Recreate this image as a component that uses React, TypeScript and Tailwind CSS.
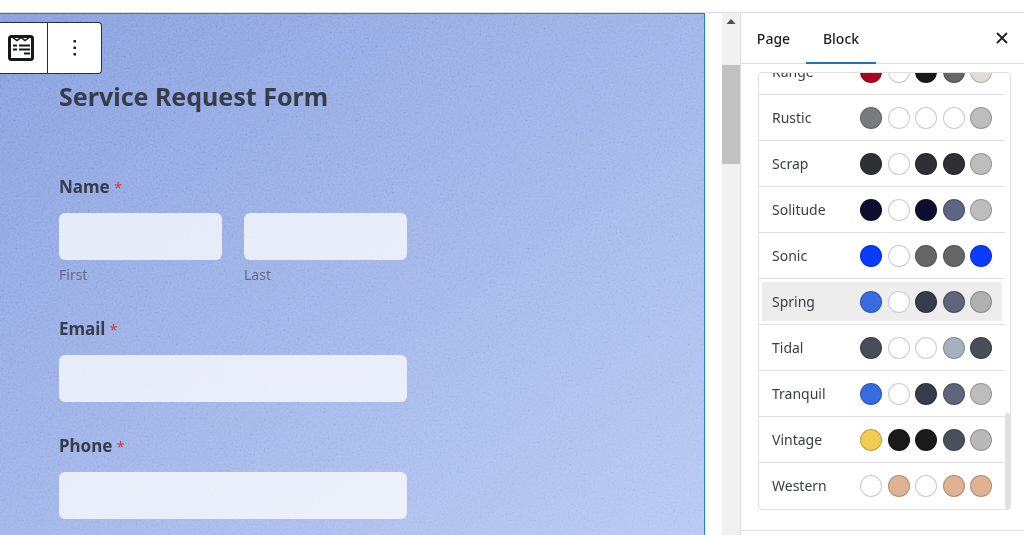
import React, { useState } from "react";

interface Theme {
  name: string;
  colors: string[];
}

const themes: Theme[] = [
  { name: "Range", colors: ["#ab0520", "#ffffff", "#1a1a1a", "#666666", "#e0dcd8"] },
  { name: "Rustic", colors: ["#7a7b7d", "#ffffff", "#ffffff", "#ffffff", "#bdbdbd"] },
  { name: "Scrap", colors: ["#2e3033", "#ffffff", "#2e3033", "#2e3033", "#bdbdbd"] },
  { name: "Solitude", colors: ["#0e0f30", "#ffffff", "#0e0f30", "#5e6580", "#bdbdbd"] },
  { name: "Sonic", colors: ["#083cff", "#ffffff", "#666666", "#666666", "#083cff"] },
  { name: "Spring", colors: ["#376be0", "#ffffff", "#363c4a", "#5f6478", "#b0b0b0"] },
  { name: "Tidal", colors: ["#484e58", "#ffffff", "#ffffff", "#a5b1bf", "#484e58"] },
  { name: "Tranquil", colors: ["#376be0", "#ffffff", "#363c4a", "#5f6478", "#bdbdbd"] },
  { name: "Vintage", colors: ["#f2cb53", "#1a1a1a", "#1a1a1a", "#4a505a", "#b9b9b9"] },
  { name: "Western", colors: ["#ffffff", "#dfb293", "#ffffff", "#dfb293", "#dfb293"] },
];

const inputClass = "block w-full h-[47px] rounded-md bg-white/75 px-3 outline-none";

const FormIcon = () => (
  <svg width="28" height="28" viewBox="0 0 28 28" fill="none" stroke="#16181b">
    <rect x="2.500" y="2.500" width="23" height="23" rx="2" strokeWidth="3" />
    <path d="M5 3 L10 6.500 L14 3.500 L18 6.500 L23 3" strokeWidth="1.500" />
    <path d="M6 11.500h4M12 11.500h11M6 15.500h4M12 15.500h11M17 19.500h6" strokeWidth="2" />
  </svg>
);

const Toolbar = () => (
  <div className="absolute left-0 top-2 flex h-[52px] w-[102px] rounded-r-sm border border-l-0 border-[#2b2d30] bg-white">
    <button type="button" aria-label="Form block" className="flex w-12 items-center justify-end border-r border-[#2b2d30] pr-3">
      <FormIcon />
    </button>
    <button type="button" aria-label="Options" className="flex flex-1 items-center justify-center">
      <svg width="4" height="18" viewBox="0 0 4 18" fill="#16181b">
        <rect x="0.500" y="1" width="2.500" height="2.500" rx="0.500" />
        <rect x="0.500" y="7.500" width="2.500" height="2.500" rx="0.500" />
        <rect x="0.500" y="14" width="2.500" height="2.500" rx="0.500" />
      </svg>
    </button>
  </div>
);

// Paper grain over the form background
const Grain = () => (
  <svg className="pointer-events-none absolute inset-0 h-full w-full opacity-25 mix-blend-soft-light" aria-hidden="true">
    <filter id="grain">
      <feTurbulence type="fractalNoise" baseFrequency="0.5" numOctaves="3" />
      <feColorMatrix
        type="matrix"
        values="1.500 0 0 0 -0.25  1.500 0 0 0 -0.25  1.500 0 0 0 -0.25  0 0 0 0 1"
      />
    </filter>
    <rect width="100%" height="100%" filter="url(#grain)" />
  </svg>
);

const FieldLabel = ({ id, children }: { id: string; children: React.ReactNode }) => (
  <label htmlFor={id} className="mb-3.5 block text-[17px] leading-6 font-bold text-[#363c4a]">
    {children} <span className="text-sm font-normal text-[#d63637]">*</span>
  </label>
);

const RequestForm = () => (
  <form className="relative flex w-full max-w-[407px] flex-col gap-8 pl-[59px]">
    <div>
      <FieldLabel id="first">Name</FieldLabel>
      <div className="grid grid-cols-2 gap-[22px]">
        <div>
          <input id="first" type="text" className={inputClass} />
          <label htmlFor="first" className="mt-[5px] block text-sm leading-5 text-[#666b7c]">First</label>
        </div>
        <div>
          <input id="last" type="text" className={inputClass} />
          <label htmlFor="last" className="mt-[5px] block text-sm leading-5 text-[#666b7c]">Last</label>
        </div>
      </div>
    </div>
    <div>
      <FieldLabel id="email">Email</FieldLabel>
      <input id="email" type="email" className={inputClass} />
    </div>
    <div>
      <FieldLabel id="phone">Phone</FieldLabel>
      <input id="phone" type="tel" className={inputClass} />
    </div>
  </form>
);

const App: React.FC = () => {
  const [selected, setSelected] = useState("Spring");

  return (
    <div className="flex h-screen flex-col overflow-hidden bg-white font-['Noto_Sans','Open_Sans',sans-serif] text-[#1e1e1e]">
      <header className="h-[13px] shrink-0 border-b border-[#dcdcdc]" />

      <div className="flex min-h-0 flex-1">
        <main className="min-w-0 flex-1 pr-[17px]">
          <div className="relative h-full overflow-hidden border-t border-r border-[#1783c9] bg-linear-145 from-[#879fde] via-[#a0b4e8] to-[#b8c9f1]">
            <Grain />
            <h1 className="relative pt-16 pb-[61px] pl-[59px] text-[25px] leading-9 font-bold text-[#363c4a]">
              Service Request Form
            </h1>
            <RequestForm />
            <Toolbar />
          </div>
        </main>

        <div className="flex w-[18px] shrink-0 flex-col items-center bg-[#f1f1f1]">
          <svg width="10" height="17" viewBox="0 0 10 17" className="shrink-0" fill="#505050">
            <path d="M0.5 11 L5 6 L9.500 11 Z" />
          </svg>
          <div className="mt-[35px] h-[99px] w-full bg-[#c1c1c1]" />
        </div>

        <aside className="flex w-[284px] shrink-0 flex-col border-l border-[#dcdcdc]">
          <div className="flex h-[51px] shrink-0 items-stretch border-b border-[#dcdcdc] text-sm font-medium">
            <button type="button" className="w-[65px] pt-0.5 text-center">Page</button>
            <button type="button" className="-mb-px w-[70px] border-b-2 border-[#2271b1] pt-0.5 text-center">Block</button>
            <button type="button" aria-label="Close settings" className="ml-auto flex items-center pr-4">
              <svg width="12" height="12" viewBox="0 0 12 12" stroke="#1e1e1e" strokeWidth="1.800">
                <path d="M1 1 L11 11 M11 1 L1 11" />
              </svg>
            </button>
          </div>

          <div className="mt-2 mr-[13px] ml-[17px] flex h-[438px] shrink-0 rounded-sm border border-[#e0e0e0]">
            <div className="flex min-w-0 flex-1 flex-col justify-end overflow-hidden">
              {themes.map((theme) => (
                <label
                  key={theme.name}
                  className="flex h-[46px] shrink-0 cursor-pointer border-b border-[#e0e0e0] p-[3px] last:border-b-0"
                >
                  <input
                    type="radio"
                    name="theme"
                    className="peer sr-only"
                    checked={selected === theme.name}
                    onChange={() => setSelected(theme.name)}
                  />
                  <span className="flex flex-1 items-center justify-between px-2.5 text-sm text-[#3a3d42] peer-checked:bg-[#ededed]">
                    {theme.name}
                    <span className="flex w-[132px] justify-between">
                      {theme.colors.map((color, i) => (
                        <span
                          key={i}
                          className="h-[22px] w-[22px] rounded-full border border-black/20"
                          style={{ backgroundColor: color }}
                        />
                      ))}
                    </span>
                  </span>
                </label>
              ))}
            </div>
            <div className="flex w-[5px] flex-col justify-end">
              <div className="h-24 rounded-full bg-[#e0e0e0]" />
            </div>
          </div>

          <div className="mt-5 border-t border-[#e0e0e0]" />
        </aside>
      </div>
    </div>
  );
};

export default App;
